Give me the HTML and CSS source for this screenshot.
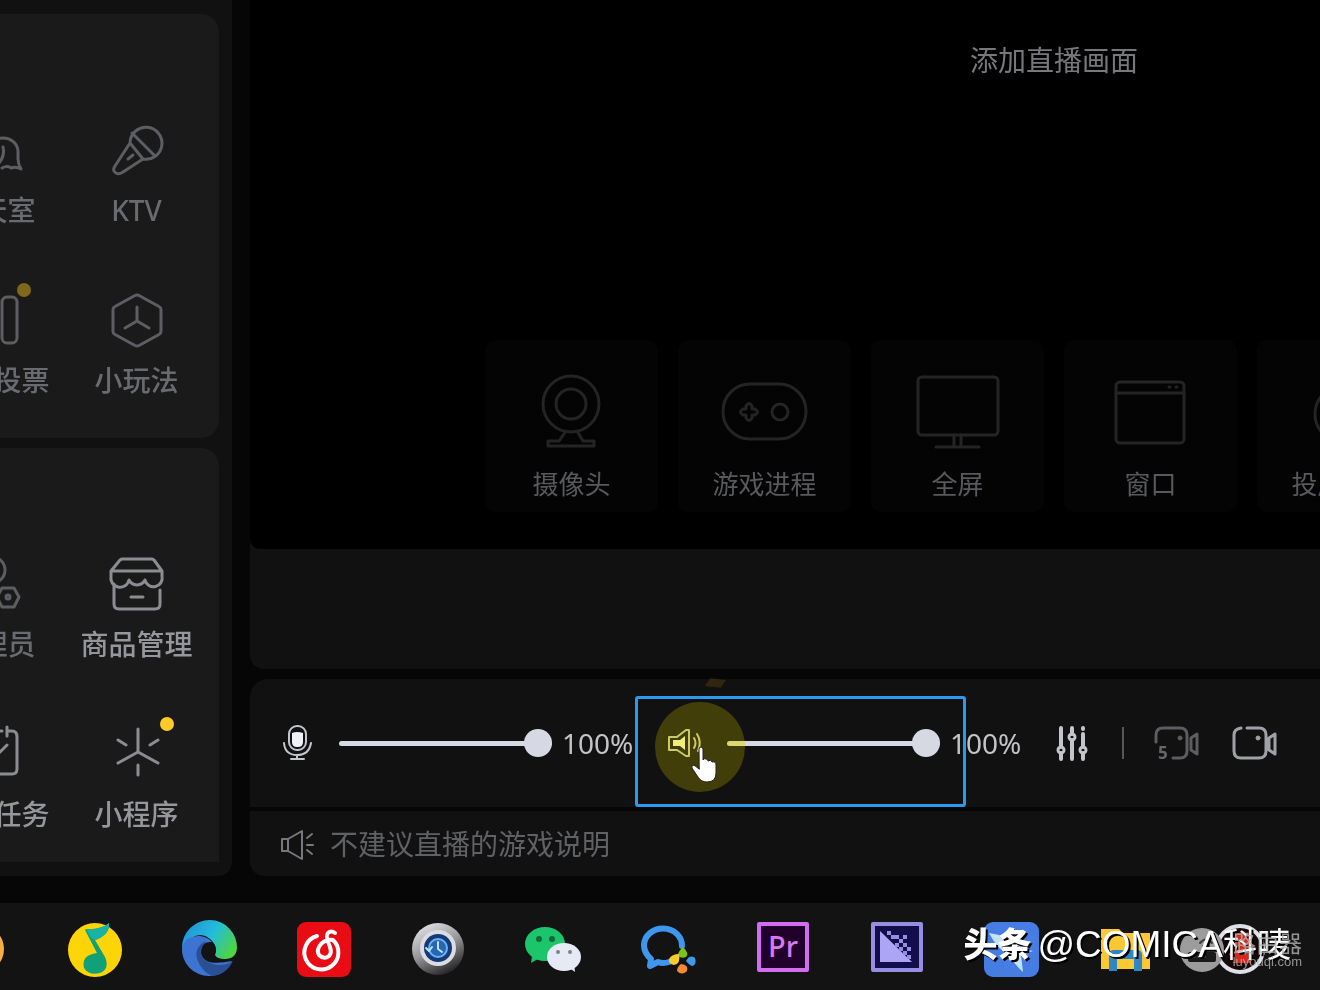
FILE: index.html
```html
<!DOCTYPE html>
<html lang="zh-CN">
<head>
    <meta charset="UTF-8">
    <meta name="viewport" content="width=device-width, initial-scale=1.0">
    <title>直播伴侣</title>
    <link rel="stylesheet" href="styles.css">
</head>
<body>
    <div class="workspace">
        <aside class="sidebar">
            <div class="panel">
                <button class="tool">
                    <span class="tool-icon">
                        <svg viewBox="0 0 56 56"><path d="M36 46q6-3 9 0q5-2 10 1q-3-5-3-10v-8a15 14 0 0 0-15-13q-7 0-11 5M37 25q2 9-4 16"/></svg>
                    </span>
                    <span class="tool-label">聊天室</span>
                </button>
                <button class="tool">
                    <span class="tool-icon">
                        <svg viewBox="0 0 56 56"><path d="M21 21A16 16 0 1 1 34 37L14 50Q8 54 5 49Q4 47 6 44ZL34 37M23 11L45 33M19 37L24 33"/></svg>
                    </span>
                    <span class="tool-label">KTV</span>
                </button>
                <button class="tool">
                    <span class="tool-icon">
                        <svg viewBox="0 0 56 56"><rect x="36" y="5" width="15" height="46" rx="5"/><rect x="12" y="20" width="15" height="31" rx="5"/></svg>
                        <span class="dot"></span>
                    </span>
                    <span class="tool-label">互动投票</span>
                </button>
                <button class="tool">
                    <span class="tool-icon">
                        <svg viewBox="0 0 56 56"><path d="M26 3.500q2-1 4 0l20 11q2 1 2 3v22q0 2-2 3l-20 11q-2 1-4 0l-20-11q-2-1-2-3v-22q0-2 2-3zM28 15v14l-12 7M28 29l12 7"/></svg>
                    </span>
                    <span class="tool-label">小玩法</span>
                </button>
            </div>
            <div class="panel panel-bottom">
                <button class="tool">
                    <span class="tool-icon">
                        <svg viewBox="0 0 56 56"><circle cx="26" cy="14" r="13"/><path d="M36 32h12l5 9l-5 10h-12l-5-10z"/><circle cx="42" cy="41" r="2"/></svg>
                    </span>
                    <span class="tool-label">管理员</span>
                </button>
                <button class="tool tool-active">
                    <span class="tool-icon">
                        <svg viewBox="0 0 56 56"><path d="M14 3h28q2 0 3 1l8 11v5a8 8 0 0 1-17 4a9 9 0 0 1-16 0a8 8 0 0 1-18-4v-5l9-11q1-1 3-1zM2 15h51M5 28v20q0 5 5 5h36q5 0 5-5v-14M22 41h12"/></svg>
                    </span>
                    <span class="tool-label">商品管理</span>
                </button>
                <button class="tool tool-active">
                    <span class="tool-icon">
                        <svg viewBox="0 0 56 56"><path d="M41 1v9M41 5h5q5 0 5 6v32q0 5-5 5h-36q-5 0-5-5v-32q0-6 5-6h3M18 5h18M41 19l-9 9l-7-6"/></svg>
                    </span>
                    <span class="tool-label">直播任务</span>
                </button>
                <button class="tool tool-active">
                    <span class="tool-icon">
                        <svg viewBox="0 0 56 56"><path d="M29 3v23l-20 11M29 26l20 11M9 14l8 5M49 14l-8 5M29 39v10"/></svg>
                        <span class="dot"></span>
                    </span>
                    <span class="tool-label">小程序</span>
                </button>
            </div>
        </aside>

        <main class="main">
            <section class="stage">
                <div class="preview">
                    <h1 class="preview-title">添加直播画面</h1>
                    <button class="source">
                        <svg viewBox="0 0 88 88"><circle cx="43" cy="36" r="28"/><circle cx="43" cy="36" r="15"/><path d="M38 63l-7 10h-11v5h46v-5h-11l-6-10"/></svg>
                        <span>摄像头</span>
                    </button>
                    <button class="source">
                        <svg viewBox="0 0 88 88"><rect x="2" y="16" width="83" height="55" rx="27"/><circle cx="59" cy="44" r="8"/><path d="M25 41v-3q3-5 6 0v3h3q5 3 0 6h-3v3q-3 5-6 0v-3h-3q-5-3 0-6z"/></svg>
                        <span>游戏进程</span>
                    </button>
                    <button class="source">
                        <svg viewBox="0 0 88 88"><rect x="4" y="9" width="80" height="58" rx="4"/><path d="M40 67v12M47 67v12M22 79h43"/></svg>
                        <span>全屏</span>
                    </button>
                    <button class="source">
                        <svg viewBox="0 0 88 88"><rect x="9" y="14" width="68" height="61" rx="4"/><path d="M9 25h68M62 19h1M69 19h1"/></svg>
                        <span>窗口</span>
                    </button>
                    <button class="source">
                        <svg viewBox="0 0 88 88"><circle cx="43" cy="46" r="28"/></svg>
                        <span>投屏直播</span>
                    </button>
                </div>
            </section>

            <section class="controls">
                <div class="volume">
                    <svg class="icon" viewBox="0 0 36 36"><rect x="11" y="1" width="17" height="24" rx="8"/><path class="solid" d="M14 8q5-2 11 0v9q0 5-5 5h-1q-5 0-5-5z"/><path d="M6 18q1 12 13 12t14-12M19 30v4M13 34h13"/></svg>
                    <input type="range" id="mic" min="0" max="100" value="100" aria-label="麦克风音量">
                    <label for="mic">100%</label>
                </div>
                <div class="volume">
                    <svg class="icon" viewBox="0 0 36 36"><path d="M3 12h8l9-7h3v26h-3l-9-6h-8z"/><path class="solid" d="M7 15h7l5-4v14l-5-4h-7z"/><path d="M28 13q3 5 0 10M31 9q5 8 1 17"/></svg>
                    <input type="range" id="speaker" min="0" max="100" value="100" aria-label="扬声器音量">
                    <label for="speaker">100%</label>
                    <span class="halo"></span>
                    <svg class="cursor" viewBox="0 0 28 38"><path d="M9 3q0-2 2-2t2 2v11q1-2 3-1q2 0 2 2q3-2 4 1q4-1 4 3v8q0 9-9 9q-6 0-9-5l-6-9q-1-3 2-3l5 4z"/></svg>
                </div>
                <button class="icon-button" aria-label="调音台">
                    <svg class="icon eq" viewBox="0 0 36 36"><path d="M7 3v19M7 28v6M18 3v6M18 15v19M29 3v1M29 9v13M29 28v6"/><circle cx="7" cy="25" r="3"/><circle cx="18" cy="12" r="3"/><circle cx="29" cy="25" r="3"/></svg>
                </button>
                <span class="separator"></span>
                <button class="icon-button" aria-label="回放">
                    <svg class="icon-wide dim" viewBox="2 0 44 36"><path d="M2 17v-7q0-7 7-7h17q7 0 7 7v16q0 7-7 7h-7M37 13l6-4v20l-6-4z"/><circle class="solid" cx="26" cy="13" r="2"/><text x="4" y="34">5</text></svg>
                </button>
                <button class="icon-button" aria-label="录制">
                    <svg class="icon-wide" viewBox="0 0 44 36"><path d="M9 3q-7 1-7 7v16q0 7 7 7h18q7 0 7-7v-16q0-7-7-7h-12M37 13l6-4v20l-6-4z"/><circle class="solid" cx="26" cy="13" r="2"/></svg>
                </button>
                <span class="callout"></span>
                <span class="spark"></span>
            </section>

            <a class="notice" href="#">
                <svg class="icon" viewBox="0 0 36 36"><path d="M2 13h6v12h-6zM8 13l14-8v28l-14-8M27 12l5-4M27 19h6M27 24l5 4"/></svg>
                <span>不建议直播的游戏说明</span>
            </a>
        </main>
    </div>

    <footer class="taskbar">
        <svg class="app" viewBox="0 0 56 56"><circle cx="28" cy="28" r="24" fill="#f6ae3c"/></svg>
        <svg class="app" viewBox="0 0 56 56">
            <circle cx="28" cy="29" r="27" fill="#fdd406"/>
            <path d="M19 8Q34 9 42 2Q43 14 28 19L38 36Q43 48 33 52Q22 55 17 47Q14 34 30 32L18 9Z" fill="#12a078"/>
            <path d="M19 8Q34 9 42 2Q43 14 28 19L24 17Z" fill="#16b3a6"/>
        </svg>
        <svg class="app" viewBox="0 0 56 56">
            <defs>
                <linearGradient id="edgeTop" x1="0" y1="0.200" x2="1" y2="0.700"><stop offset="0" stop-color="#2190d8"/><stop offset="0.500" stop-color="#22bddb"/><stop offset="1" stop-color="#50d53c"/></linearGradient>
            </defs>
            <path d="M1 26A27 27 0 0 1 56 27Q55 38 44 38Q36 38 34 34Q37 27 32 21Q18 5 1 26Z" fill="url(#edgeTop)"/>
            <path d="M1 26Q5 14 19 15Q27 16 31 21Q20 20 20 32Q22 46 51 40Q43 55 28 55A27 27 0 0 1 1 26Z" fill="#3d74d2"/>
            <path d="M23 21Q13 27 16 38Q21 51 31 55Q45 54 52 40Q42 46 32 43Q18 38 20 28Q21 24 25 21Z" fill="#2a4f94"/>
        </svg>
        <svg class="app" viewBox="0 0 56 56">
            <rect x="1" y="1" width="54" height="55" rx="9" fill="#ea0c14"/>
            <path d="M21 15A17 17 0 1 0 37 19Q30 18 25 23Q20 29 23 34Q28 39 33 35Q36 32 34 26Q29 14 32 12Q35 9 39 12" fill="none" stroke="#fff" stroke-width="4" stroke-linecap="round"/>
        </svg>
        <svg class="app" viewBox="0 0 56 56">
            <defs>
                <linearGradient id="silver" x1="0.200" y1="0" x2="0.700" y2="1"><stop offset="0" stop-color="#e4e4e8"/><stop offset="0.500" stop-color="#96969a"/><stop offset="1" stop-color="#1e1e20"/></linearGradient>
            </defs>
            <circle cx="28" cy="28" r="26" fill="url(#silver)"/>
            <circle cx="28" cy="27" r="18" fill="#dcdde2"/>
            <circle cx="28" cy="27" r="14" fill="#163a75"/>
            <circle cx="28" cy="27" r="9" fill="#2766b4" stroke="#68b4f4" stroke-width="2"/>
            <path d="M28 21v7l4 3M16 27l3 3l3-4" fill="none" stroke="#bfe2ff" stroke-width="2"/>
        </svg>
        <svg class="app" viewBox="0 0 56 56">
            <path d="M7 35l-1 7l7-4z" fill="#1cbf68"/>
            <ellipse cx="20" cy="23" rx="20" ry="17" fill="#1cc56b"/>
            <circle cx="14" cy="18" r="3" fill="#0d6c3a"/><circle cx="27" cy="18" r="3" fill="#0d6c3a"/>
            <path d="M43 46l7 5l-1-9z" fill="#e6eaf4"/>
            <ellipse cx="39" cy="36" rx="17" ry="14" fill="#e6eaf4"/>
            <circle cx="33" cy="31" r="2" fill="#7b828c"/><circle cx="45" cy="31" r="2" fill="#7b828c"/>
        </svg>
        <svg class="app" viewBox="0 0 56 56">
            <path d="M43 25A19 17 0 0 0 5 24Q5 32 12 38L11 45L19 41Q24 43 30 41" fill="none" stroke="#3e97ee" stroke-width="6"/>
            <path d="M44 26Q51 33 47 36Q43 38 39 35Q38 32 44 26Z" fill="#7cc21c"/>
            <path d="M40 33Q42 43 35 44Q29 43 30 38Q33 33 40 33Z" fill="#f8ca2c"/>
            <path d="M47 40Q51 33 56 37Q58 42 54 45Q51 45 47 40Z" fill="#3e9be8"/>
            <path d="M42 43Q50 44 48 50Q43 55 38 50Q38 46 42 43Z" fill="#f48a34"/>
        </svg>
        <svg class="app" viewBox="0 0 56 56">
            <rect x="5" y="3" width="48" height="46" fill="#22002c" stroke="#d26cf0" stroke-width="4"/>
            <text class="app-text" x="14" y="36">Pr</text>
        </svg>
        <svg class="app" viewBox="0 0 56 56">
            <rect x="5" y="3" width="48" height="46" fill="#130d4c" stroke="#968ee0" stroke-width="4"/>
            <path d="M12 10L44 41H12Z" fill="#aca4f4"/>
            <path d="M19 10h4v4h-4zM27 14h4v4h-4zM23 14h4v4h-4zM35 14h4v4h-4zM31 18h4v4h-4zM27 22h4v4h-4zM35 22h4v4h-4zM31 26h4v4h-4zM39 26h4v4h-4zM35 30h4v4h-4zM39 34h4v4h-4z" fill="#968ee0"/>
        </svg>
        <svg class="app" viewBox="0 0 56 56">
            <rect x="1" y="1" width="55" height="55" rx="9" fill="#467de2"/>
            <path d="M6 12Q24 14 40 28L50 30L38 34L40 51Q32 44 26 34Q14 28 6 12Z" fill="#c3e2fb"/>
        </svg>
        <svg class="app" viewBox="0 0 56 56">
            <path d="M4 8h18l4 4h27v36H4z" fill="#fbc835"/>
            <path d="M12 50V34q0-5 5-5h23q5 0 5 5v16h-8v-12h-17v12z" fill="#2f86c2"/>
        </svg>
        <svg class="app" viewBox="0 0 56 56">
            <circle cx="28" cy="28" r="23" fill="#15090a" stroke="#dfe1e8" stroke-width="4"/>
            <path d="M23 12h14l3 10l-2 20h-17l-4-9l6-6z" fill="#d8281c"/>
        </svg>
        <div class="site-mark">
            <svg viewBox="0 0 44 44"><circle cx="22" cy="22" r="22" fill="#9c9c9c"/><path d="M10 24h24q2 0 2 2v6q0 2-2 2h-24q-2 0-2-2v-6q0-2 2-2z" fill="#1a1a1a"/><path d="M26 24v-7M20 15q6-7 12 0M23 18q3-3 6 0M13 29h2M18 29h2M23 29h2" fill="none" stroke="#3c3c3c" stroke-width="2"/></svg>
            <div class="site-name"><span>路由器</span><small>luyouqi.com</small></div>
        </div>
        <div class="author-mark"><b>头条</b><span>@COMICA<i>科唛</i></span></div>
    </footer>
</body>
</html>
```

FILE: styles.css
```css
* {
    box-sizing: border-box;
}
body {
    margin: 0;
    min-height: 100vh;
    display: flex;
    flex-direction: column;
    overflow: hidden;
    background-color: #060606;
    color: #77787d;
    font-family: "Noto Sans", "Noto Sans CJK SC", sans-serif;
    font-size: 28px;
    line-height: 36px;
}
button {
    padding: 0;
    border: none;
    background: none;
    color: inherit;
    font: inherit;
    cursor: pointer;
}
svg {
    display: block;
    flex-shrink: 0;
    overflow: visible;
    fill: none;
    stroke-linecap: round;
    stroke-linejoin: round;
}
.workspace {
    flex: 1;
    display: flex;
    gap: 18px;
    padding-bottom: 27px;
}

/* left tool panels */
.sidebar {
    width: 232px;
    flex-shrink: 0;
    display: flex;
    flex-direction: column;
    gap: 10px;
    padding: 14px 13px 14px 0;
    background-color: #111;
    border-radius: 0 0 14px 0;
}
.panel {
    display: grid;
    grid-template-columns: 143px 143px;
    justify-content: end;
    row-gap: 64px;
    padding: 108px 11px 40px 0;
    background-color: #1a1a1a;
    border-radius: 0 18px 18px 0;
}
.panel-bottom {
    padding-bottom: 30px;
    border-radius: 0 18px 0 0;
}
.tool {
    display: flex;
    flex-direction: column;
    align-items: center;
    gap: 14px;
    color: #6a6b70;
    font-weight: 500;
    white-space: nowrap;
}
.tool-active {
    color: #96979c;
}
.tool-icon {
    position: relative;
}
.tool-icon svg {
    width: 56px;
    height: 56px;
    stroke: #5d5e63;
    stroke-width: 3;
}
.tool-active svg {
    stroke: #8c8d92;
}
.dot {
    position: absolute;
    top: -9px;
    right: -9px;
    width: 14px;
    height: 14px;
    border-radius: 50%;
    background-color: #80681a;
}
.tool-active .dot {
    background-color: #ffc928;
}

/* main column */
.main {
    flex: 1;
    min-width: 0;
    display: flex;
    flex-direction: column;
}
.stage {
    flex: 1;
    margin-bottom: 10px;
    padding-bottom: 120px;
    background-color: #111;
    border-radius: 0 0 0 14px;
}
.preview {
    display: grid;
    grid-template-columns: repeat(6, 173px);
    column-gap: 20px;
    row-gap: 260px;
    padding: 40px 0 37px 235px;
    overflow: hidden;
    background-color: #000;
    border-radius: 0 0 0 10px;
}
.preview-title {
    grid-column: 1 / -1;
    margin: 0;
    color: #77787c;
    font-size: 28px;
    font-weight: normal;
    line-height: 40px;
    text-align: center;
}
.source {
    display: flex;
    flex-direction: column;
    align-items: center;
    gap: 10px;
    padding: 28px 0 10px;
    background-color: #040404;
    border-radius: 10px;
    color: #58595d;
    font-size: 26px;
}
.source svg {
    width: 88px;
    height: 88px;
    stroke: #242426;
    stroke-width: 3;
}
.controls {
    position: relative;
    height: 128px;
    display: flex;
    align-items: center;
    gap: 32px;
    padding-left: 28px;
    margin-bottom: 4px;
    background-color: #111;
    border-radius: 18px 0 0 0;
}
.volume {
    position: relative;
    display: flex;
    align-items: center;
    color: #c4c4c8;
}
.volume input {
    width: 213px;
    height: 28px;
    margin: 0 10px 0 25px;
    background: none;
    -webkit-appearance: none;
    appearance: none;
}
.volume input::-webkit-slider-runnable-track {
    height: 5px;
    border-radius: 3px;
    background-color: #d6d8e4;
}
.volume input::-webkit-slider-thumb {
    -webkit-appearance: none;
    width: 28px;
    height: 28px;
    margin-top: -12px;
    border-radius: 50%;
    background-color: #d6d8e4;
}
.volume label {
    width: 72px;
}
.icon {
    width: 36px;
    height: 36px;
    stroke: #c4c5cb;
    stroke-width: 2;
}
.icon .solid {
    fill: #f0f1f6;
    stroke: none;
}
.eq {
    stroke-width: 4;
}
.eq circle {
    stroke-width: 3;
}
.icon-wide {
    width: 44px;
    height: 36px;
    stroke: #a0a1a6;
    stroke-width: 3;
}
.icon-wide .solid {
    fill: #a0a1a6;
    stroke: #a0a1a6;
    stroke-width: 1;
}
.icon-wide text {
    fill: #66676b;
    stroke: none;
    font-size: 17px;
    font-weight: bold;
}
.icon-wide.dim,
.icon-wide.dim .solid {
    stroke: #5c5d61;
}
.icon-wide.dim .solid {
    fill: #5c5d61;
}
.separator {
    width: 2px;
    height: 32px;
    background-color: #56575b;
}

/* yellow pointer highlight */
.halo {
    position: absolute;
    top: -23px;
    left: -11px;
    width: 90px;
    height: 90px;
    border-radius: 50%;
    background-color: rgba(240, 224, 0, 0.22);
}
.halo::after {
    content: "";
    position: absolute;
    inset: 0;
    border-radius: 50%;
    background-color: #ffffa0;
    mix-blend-mode: multiply;
}
.cursor {
    position: absolute;
    top: 21px;
    left: 24px;
    width: 28px;
    height: 38px;
    fill: #fff;
    stroke: #222;
    stroke-width: 1;
}
.callout {
    position: absolute;
    top: 17px;
    left: 385px;
    width: 331px;
    height: 111px;
    border: 3px solid #2c98ee;
    border-radius: 3px;
}
.spark {
    position: absolute;
    top: 0;
    left: 457px;
    width: 17px;
    height: 8px;
    background-color: #33260e;
    transform: skewX(-30deg) rotate(6deg);
}
.notice {
    height: 65px;
    display: flex;
    align-items: center;
    gap: 14px;
    padding-left: 30px;
    background-color: #111;
    border-radius: 0 0 0 14px;
    color: #606165;
    text-decoration: none;
}
.notice .icon {
    stroke: #77787c;
}

/* taskbar */
.taskbar {
    position: relative;
    display: flex;
    justify-content: space-between;
    padding: 18px 52px 13px 0;
    background-color: #131313;
}
.app {
    width: 56px;
    height: 56px;
}
.app:first-child {
    margin-left: -48px;
}
.app-text {
    fill: #d878f2;
    font-size: 29px;
    font-weight: 500;
}
.site-mark {
    position: absolute;
    right: 18px;
    bottom: 18px;
    display: flex;
    align-items: center;
    gap: 9px;
    color: #b4b4b4;
}
.site-mark svg {
    width: 44px;
    height: 44px;
}
.site-name {
    position: relative;
    z-index: 1;
    display: flex;
    flex-direction: column;
    align-items: flex-end;
    font-size: 23px;
    line-height: 24px;
    opacity: 0.8;
}
.site-name small {
    font-family: "Liberation Sans", sans-serif;
    font-size: 13px;
    line-height: 14px;
}
.author-mark {
    position: absolute;
    right: 29px;
    bottom: 23px;
    display: flex;
    align-items: center;
    gap: 6px;
    color: #fff;
    font-family: "Liberation Sans", "Noto Sans CJK SC", sans-serif;
    font-size: 37px;
    line-height: 44px;
    white-space: nowrap;
    text-shadow: 2px 2px 0 #000;
}
.author-mark b {
    font-size: 34px;
    font-weight: 900;
}
.author-mark i {
    font-size: 34px;
    font-style: normal;
}
```
